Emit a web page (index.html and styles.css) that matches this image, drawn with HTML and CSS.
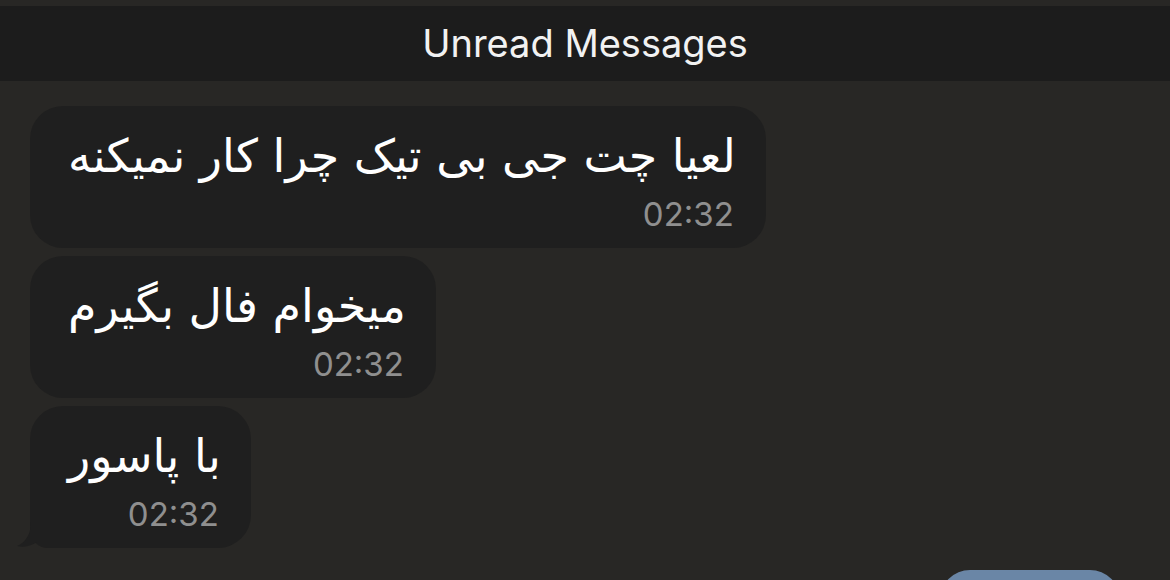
FILE: index.html
```html
<!DOCTYPE html>
<html lang="fa">
<head>
<meta charset="utf-8">
<link rel="stylesheet" href="styles.css">
</head>
<body>
<div class="screen">
  <div class="unread-bar">Unread Messages</div>
  <div class="messages">
    <div class="bubble">
      <div class="text">لعیا چت جی بی تیک چرا کار نمیکنه</div>
      <div class="time">02:32</div>
    </div>
    <div class="bubble">
      <div class="text">میخوام فال بگیرم</div>
      <div class="time">02:32</div>
    </div>
    <div class="bubble last">
      <div class="text">با پاسور</div>
      <div class="time">02:32</div>
      <svg class="tail" width="20" height="26" viewBox="0 0 20 26"><path d="M14 0 C14 10 10 20 0 24 C6 26 14 24 20 20 L20 0 Z" fill="#1f1f1f"/></svg>
    </div>
    <div class="outgoing"></div>
  </div>
</div>
</body>
</html>
```

FILE: styles.css
```css
html, body {
  margin: 0;
  padding: 0;
  background: #282725;
  overflow: hidden;
}
.screen {
  width: 1170px;
  height: 580px;
  padding-top: 6px;
  box-sizing: border-box;
  overflow: hidden;
}
.unread-bar {
  height: 75px;
  background: #1c1c1c;
  color: #f2f2f2;
  font-family: Inter, "Liberation Sans", sans-serif;
  font-size: 38px;
  display: flex;
  align-items: center;
  justify-content: center;
  padding-bottom: 2px;
  box-sizing: border-box;
}
.messages {
  display: flex;
  flex-direction: column;
  align-items: flex-start;
  gap: 8px;
  padding: 25px 0 0 30px;
}
.bubble {
  position: relative;
  direction: rtl;
  background: #1f1f1f;
  border-radius: 33px;
  height: 142px;
  box-sizing: border-box;
  padding: 18px 30px 0 38px;
  display: flex;
  flex-direction: column;
  align-items: flex-start;
}
.text {
  font-family: "DejaVu Sans", sans-serif;
  font-size: 46px;
  line-height: 64px;
  color: #ffffff;
  white-space: nowrap;
}
.time {
  font-family: Inter, "Liberation Sans", sans-serif;
  font-size: 33px;
  line-height: 40px;
  color: #8f8f8f;
  margin-top: 6px;
  margin-right: 2px;
}
.last {
  border-bottom-left-radius: 18px;
}
.tail {
  position: absolute;
  left: -13px;
  bottom: 0;
}
.outgoing {
  align-self: flex-end;
  margin-right: 50px;
  margin-top: 14px;
  width: 180px;
  height: 60px;
  background: #6a86a6;
  border-radius: 30px;
}
```
